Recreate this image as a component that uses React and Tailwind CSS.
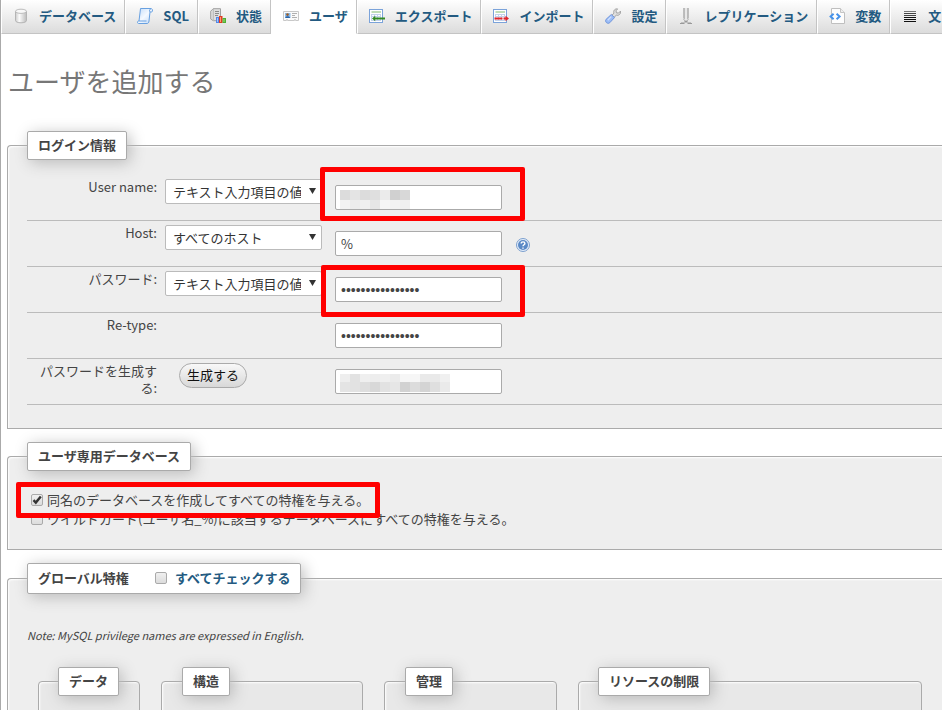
import React from 'react';

function DatabaseIcon() {
  return (
    <svg width="16" height="16" viewBox="0 0 16 16" aria-hidden="true">
      <defs>
        <linearGradient id="db" x1="0" x2="1" y1="0" y2="0">
          <stop offset="0" stopColor="#cccccc" />
          <stop offset=".35" stopColor="#fbfbfb" />
          <stop offset="1" stopColor="#bcbcbc" />
        </linearGradient>
      </defs>
      <path d="M2.5 3.5v9c0 1.4 2.4 2.3 5.5 2.3s5.5-.9 5.5-2.3v-9z" fill="url(#db)" stroke="#b4b4b4" />
      <ellipse cx="8" cy="3.3" rx="5.5" ry="2.1" fill="#f8f8f8" stroke="#bcbcbc" />
    </svg>
  );
}

function SqlIcon() {
  return (
    <svg width="16" height="16" viewBox="0 0 16 16" aria-hidden="true">
      <defs>
        <linearGradient id="scroll" x1="0" x2="1" y1="0" y2="1">
          <stop offset="0" stopColor="#c3dcfa" />
          <stop offset=".5" stopColor="#f4f9ff" />
          <stop offset="1" stopColor="#bad6f8" />
        </linearGradient>
      </defs>
      <path d="M3.500.5H14c1.700 0 2 3.500.5 3.500H13l-1 9c-.2 1.600-.8 2.500-2 2.500H1.500c-1.300 0-1.300-2.500 0-2.500H2z" fill="url(#scroll)" stroke="#68a0e0" />
      <path d="M13 4c-.9-1-.5-3 1-3.300M2 13h7.500" fill="none" stroke="#68a0e0" />
    </svg>
  );
}

function StatusIcon() {
  return (
    <svg width="16" height="16" viewBox="0 0 16 16" aria-hidden="true">
      <path d="M.7 3.200 3.200.7h7.300v12H3.200L.7 11z" fill="#dedede" stroke="#a0a0a0" />
      <path d="M3.300 1v11.500" fill="none" stroke="#b8b8b8" />
      <path d="M5 3.500h4M5 5.500h4M5 7.500h3" fill="none" stroke="#8b8b8b" />
      <rect x="6" y="9" width="3" height="6" fill="#5387e8" />
      <rect x="7" y="10" width="1" height="4" fill="#a6c4fb" />
      <rect x="9" y="8" width="3.500" height="7" fill="#e23b20" />
      <rect x="10" y="9" width="1" height="5" fill="#ff9a78" />
      <rect x="12.500" y="10" width="3.500" height="5" fill="#4eae32" />
      <rect x="13.500" y="11" width="1" height="3" fill="#9be47c" />
    </svg>
  );
}

function UserIcon() {
  return (
    <svg width="16" height="16" viewBox="0 0 16 16" aria-hidden="true">
      <path d="M.5 3.500h15v9h-3v-1h-1v1h-7v-1h-1v1h-3z" fill="#fafafa" stroke="#c8c8c8" />
      <rect x="2" y="5" width="5.500" height="5" fill="#8dbbe8" />
      <circle cx="4.500" cy="6.600" r="1.300" fill="#9b5c25" />
      <path d="M2.200 10c.2-2.300 4.600-2.300 4.900 0z" fill="#2a64a8" />
      <path d="M9 5.500h5M9 7.500h3M9 9.500h5" stroke="#b0b0b0" fill="none" />
    </svg>
  );
}

function SheetIcon({ arrow }) {
  return (
    <svg width="16" height="16" viewBox="0 0 16 16" aria-hidden="true">
      <rect x=".5" y="1.500" width="13" height="13" fill="#ffffff" stroke="#7ba3da" />
      <path d="M2.500 4H12" stroke="#80bb6f" />
      <path d="M2 6.500h10M2 8.500h10M2 12.500h10M5.500 6v7M8.500 6v7M2.500 6v7M11.500 6v7" stroke="#c3d2ea" fill="none" />
      {arrow === 'left' ? (
        <path d="M3 10.500 6.200 7.800v1.700H16v2H6.200v1.700z" fill="#338a24" />
      ) : (
        <path d="M1.500 9.500h8v2h-8zM10.500 9.500h2V7.800l3.500 2.700-3.500 2.700v-1.700h-2z" fill="#e0272c" />
      )}
    </svg>
  );
}

function WrenchIcon() {
  return (
    <svg width="16" height="16" viewBox="0 0 16 16" aria-hidden="true">
      <path d="M6.600 7.500 9 5.200C8 2.700 9.900.5 12.600.9L11 2.800l.4 2 2.100.3 1.900-1.900c.7 2.500-1.500 4.700-4.100 4L8.900 9.500z" fill="#e0e0e0" stroke="#999999" strokeWidth=".9" />
      <path d="m6.300 6.500 3.200 3.100-4.700 5.100c-2.200 1.900-5.500-1-3.700-3.400z" fill="#9cbdf6" stroke="#6a90d8" strokeWidth=".9" />
      <path d="M6.300 8.600 2.800 12.300" stroke="#cfe0ff" strokeWidth="1.300" />
    </svg>
  );
}

function ReplicationIcon() {
  return (
    <svg width="16" height="16" viewBox="0 0 16 16" aria-hidden="true">
      <path d="M5.500 0v10.500M10.500 0v10.500" stroke="#bdbdbd" />
      <path d="M7.500 0v12M8.500 0v12" stroke="#e8e8e8" />
      <path d="M6.500 0v11M9.500 0v11" stroke="#a2a2a2" strokeWidth=".7" />
      <path d="M5.500 11l1.500 2h2l1.500-2" fill="none" stroke="#b0b0b0" />
      <path d="M3 14.500h10" stroke="#c0c0c0" />
      <path d="M2 15.500h4.500M9.500 15.500H14M6.500 13.500h3" stroke="#999999" />
    </svg>
  );
}

function VariablesIcon() {
  return (
    <svg width="16" height="16" viewBox="0 0 16 16" aria-hidden="true">
      <path d="M2.500.5h9l4 4v11h-13z" fill="#fdfdfd" stroke="#bfbfbf" />
      <path d="M11.500.5v4h4" fill="#eeeeee" stroke="#c4c4c4" />
      <path d="M4.600 5.700 1.600 8.500l3 2.800M7.600 5.700l3 2.800-3 2.800" fill="none" stroke="#4592ea" strokeWidth="2" />
    </svg>
  );
}

function LinesIcon() {
  return (
    <svg width="16" height="16" viewBox="0 0 16 16" aria-hidden="true">
      <path d="M2 3.500h12" stroke="#777777" />
      <path d="M2 5.500h12M2 7.500h12" stroke="#444444" />
      <path d="M2 9.500h12M2 11.500h12M2 13.500h12" stroke="#111111" />
    </svg>
  );
}

function HelpIcon() {
  return (
    <svg width="14" height="14" viewBox="0 0 14 14" aria-hidden="true">
      <circle cx="7" cy="7" r="6.500" fill="#e4eefa" stroke="#7c9fce" />
      <circle cx="7" cy="7" r="5" fill="#5a89c6" />
      <path d="M5.200 5.600c0-2.300 3.700-2.200 3.700-.1C8.900 6.800 7 6.800 7 8.300M7 9.400v1.400" fill="none" stroke="#ffffff" strokeWidth="1.400" />
    </svg>
  );
}

const TABS = [
  { label: 'データベース', icon: <DatabaseIcon /> },
  { label: 'SQL', icon: <SqlIcon /> },
  { label: '状態', icon: <StatusIcon /> },
  { label: 'ユーザ', icon: <UserIcon />, active: true },
  { label: 'エクスポート', icon: <SheetIcon arrow="left" /> },
  { label: 'インポート', icon: <SheetIcon arrow="right" /> },
  { label: '設定', icon: <WrenchIcon /> },
  { label: 'レプリケーション', icon: <ReplicationIcon /> },
  { label: '変数', icon: <VariablesIcon /> },
  { label: '文', icon: <LinesIcon /> },
];

function Tab({ label, icon, active }) {
  const look = active
    ? 'border-b-white border-l-white bg-white'
    : 'border-b-[#c4c4c4] border-l-white bg-linear-to-b from-white to-[#dcdcdc]';
  return (
    <li className="shrink-0">
      <a
        href="#"
        className={`flex h-[34px] items-center gap-[10px] border-r border-b border-l border-r-[#c4c4c4] pr-2 pb-px pl-[11px] font-bold whitespace-nowrap text-[#235a81] ${look}`}
      >
        {icon}
        {label}
      </a>
    </li>
  );
}

function Panel({ legend, className, children }) {
  return (
    <fieldset className={`min-w-0 rounded-tl border border-[#aaa] shadow-[inset_1px_1px_2px_#fff] ${className}`}>
      <legend className="flex min-h-[29px] items-center rounded-xs border border-[#aaa] bg-white px-[10px] pb-[2px] font-bold whitespace-nowrap shadow-[3px_3px_15px_#bbb]">
        {legend}
      </legend>
      {children}
    </fieldset>
  );
}

function Row({ id, label, children }) {
  return (
    <div className="flex h-[46px] items-start border-b border-[#bbb]">
      <label htmlFor={id} className="mt-[3px] w-[130px] shrink-0 text-right leading-[17px]">
        {label}
      </label>
      <div className="flex items-start pl-2">{children}</div>
    </div>
  );
}

function Choice({ label, text }) {
  return (
    <div className="relative mt-1 w-[157px]">
      <select
        aria-label={label}
        className="block h-[25px] w-full appearance-none overflow-hidden rounded-xs border border-[#bbb] bg-white pr-[20px] pl-[7px] text-[#333]"
      >
        <option>{text}</option>
      </select>
      <svg className="pointer-events-none absolute top-[9px] right-[6px]" width="7" height="6" viewBox="0 0 7 6" aria-hidden="true">
        <path d="M0 0h7L3.500 6z" fill="#333" />
      </svg>
    </div>
  );
}

function Field({ children, ...props }) {
  return (
    <div className="relative mt-[10px] ml-[13px] w-[167px]">
      <input
        {...props}
        className={`block h-[25px] w-full rounded-xs border border-[#aaa] bg-white px-[5px] text-[#444] ${
          props.type === 'password' ? "font-['Liberation_Sans'] text-sm" : ''
        }`}
      />
      {children}
    </div>
  );
}

function Mosaic({ rows, heights }) {
  return (
    <div className="pointer-events-none absolute top-[5px] left-[5px]">
      {rows.map((row, r) => (
        <div key={r} className="flex">
          {row.map((c, i) => (
            <span key={i} className="w-[10px]" style={{ backgroundColor: c, height: heights[r] }} />
          ))}
        </div>
      ))}
    </div>
  );
}

function Tick({ id, checked }) {
  return (
    <span className="relative block size-3 shrink-0">
      <input
        id={id}
        type="checkbox"
        defaultChecked={checked}
        className="peer block size-3 appearance-none rounded-xs border border-[#aaa] bg-linear-to-b from-[#f0f0f0] to-[#dcdcdc]"
      />
      <svg
        className="pointer-events-none absolute inset-0 hidden peer-checked:block"
        width="12"
        height="12"
        viewBox="0 0 12 12"
        aria-hidden="true"
      >
        <path d="M2.500 6.200 4.800 8.600 9.800 2.600" fill="none" stroke="#333" strokeWidth="2.400" />
      </svg>
    </span>
  );
}

const HIGHLIGHT = 'pointer-events-none absolute z-10 rounded-xs border-5 border-[#f00]';

export default function App() {
  return (
    <div className="h-screen overflow-hidden border-l border-[#aaa] bg-white font-['Noto_Sans_CJK_JP',sans-serif] text-[13px] text-[#444]">
      <nav>
        <ul className="flex">
          {TABS.map((t) => (
            <Tab key={t.label} {...t} />
          ))}
        </ul>
      </nav>

      <main className="pl-[6px]">
        <h1 className="pt-[28px] pb-[31px] pl-px text-[26px] leading-[38px] font-normal text-[#777]">ユーザを追加する</h1>

        <form onSubmit={(e) => e.preventDefault()} className="flex flex-col gap-[13px]">
          <Panel legend="ログイン情報" className="border-r-0 bg-[#eee] pt-[15px] pb-[23px] pl-[19px]">
            <Row id="username" label="User name:">
              <Choice label="User name" text="テキスト入力項目の値" />
              <Field id="username" type="text">
                <Mosaic
                  heights={[10, 9]}
                  rows={[
                    ['#dcdcdc', '#e4e4e4', '#dcdcdc', '#dfdfdf', '#ebebeb', '#d0d0d0', '#d8d8d8'],
                    ['#f2f2f2', '#ececec', '#f0f0f0', '#e6e6e6', '#f6f6f6', '#f2f2f2', '#f0f0f0'],
                  ]}
                />
                <span className={`${HIGHLIGHT} -top-[18px] -left-[15px] h-[54px] w-[205px]`} />
              </Field>
            </Row>
            <Row id="host" label="Host:">
              <Choice label="Host" text="すべてのホスト" />
              <Field id="host" type="text" defaultValue="%" />
              <a href="#" aria-label="Help" className="mt-[17px] ml-[14px]">
                <HelpIcon />
              </a>
            </Row>
            <Row id="password" label="パスワード:">
              <Choice label="パスワード" text="テキスト入力項目の値" />
              <Field id="password" type="password" defaultValue="0123456789abcdef">
                <span className={`${HIGHLIGHT} -top-[12px] -left-[14px] h-[52px] w-[204px]`} />
              </Field>
            </Row>
            <Row id="retype" label="Re-type:">
              <div className="w-[157px]" />
              <Field id="retype" type="password" defaultValue="0123456789abcdef" />
            </Row>
            <Row id="generated" label="パスワードを生成する:">
              <div className="w-[157px] pt-1 pl-[14px]">
                <button
                  type="button"
                  className="flex h-[25px] items-center rounded-full border border-[#aaa] bg-linear-to-b from-[#f8f8f8] to-[#d8d8d8] px-[7px] pb-[2px] text-[#111]"
                >
                  生成する
                </button>
              </div>
              <Field id="generated" type="text">
                <Mosaic
                  heights={[8, 10]}
                  rows={[
                    ['#eeeeee', '#e2e2e2', '#efefef', '#ededed', '#efefef', '#ebebeb', '#f6f6f6', '#f6f6f6', '#e9e9e9', '#e9e9e9', '#f0f0f0'],
                    ['#e4e4e4', '#e2e2e2', '#dedede', '#d8d8d8', '#e2e2e2', '#e6e6e6', '#d2d2d2', '#dcdcdc', '#d4d4d4', '#dfdfdf', '#eaeaea'],
                  ]}
                />
              </Field>
            </Row>
          </Panel>

          <Panel legend="ユーザ専用データベース" className="border-r-0 bg-[#eee] pt-[19px] pb-[21px] pl-[19px]">
            <div className="relative flex h-[19px] items-center gap-1 pl-1">
              <Tick id="createdb" checked />
              <label htmlFor="createdb">同名のデータベースを作成してすべての特権を与える。</label>
              <span className={`${HIGHLIGHT} -top-[8px] -left-[11px] h-[36px] w-[364px]`} />
            </div>
            <div className="flex h-[19px] items-center gap-1 pl-1">
              <Tick id="wildcard" />
              <label htmlFor="wildcard">ワイルドカード(ユーザ名_%)に該当するデータベースにすべての特権を与える。</label>
            </div>
          </Panel>

          <Panel
            className="border-r-0 bg-[#eee] pt-[31px] pl-[19px]"
            legend={
              <span className="flex h-[27px] items-center">
                グローバル特権
                <span className="flex items-center gap-2 pl-[26px]">
                  <Tick id="checkall" />
                  <label htmlFor="checkall" className="text-[#235a81]">
                    すべてチェックする
                  </label>
                </span>
              </span>
            }
          >
            <p className="text-[11px] leading-5 italic">Note: MySQL privilege names are expressed in English.</p>
            <div className="flex items-start gap-[21px] pt-[22px] pr-5 pl-[11px]">
              <Panel legend="データ" className="h-40 w-[102px] shrink-0 rounded-tr bg-[#e8e8e8] pl-[19px]" />
              <Panel legend="構造" className="h-40 w-[202px] shrink-0 rounded-tr bg-[#e8e8e8] pl-[20px]" />
              <Panel legend="管理" className="h-40 w-[173px] shrink-0 rounded-tr bg-[#e8e8e8] pl-[20px]" />
              <Panel legend="リソースの制限" className="h-40 flex-1 rounded-tr bg-[#e8e8e8] pl-[19px]" />
            </div>
          </Panel>
        </form>
      </main>
    </div>
  );
}
